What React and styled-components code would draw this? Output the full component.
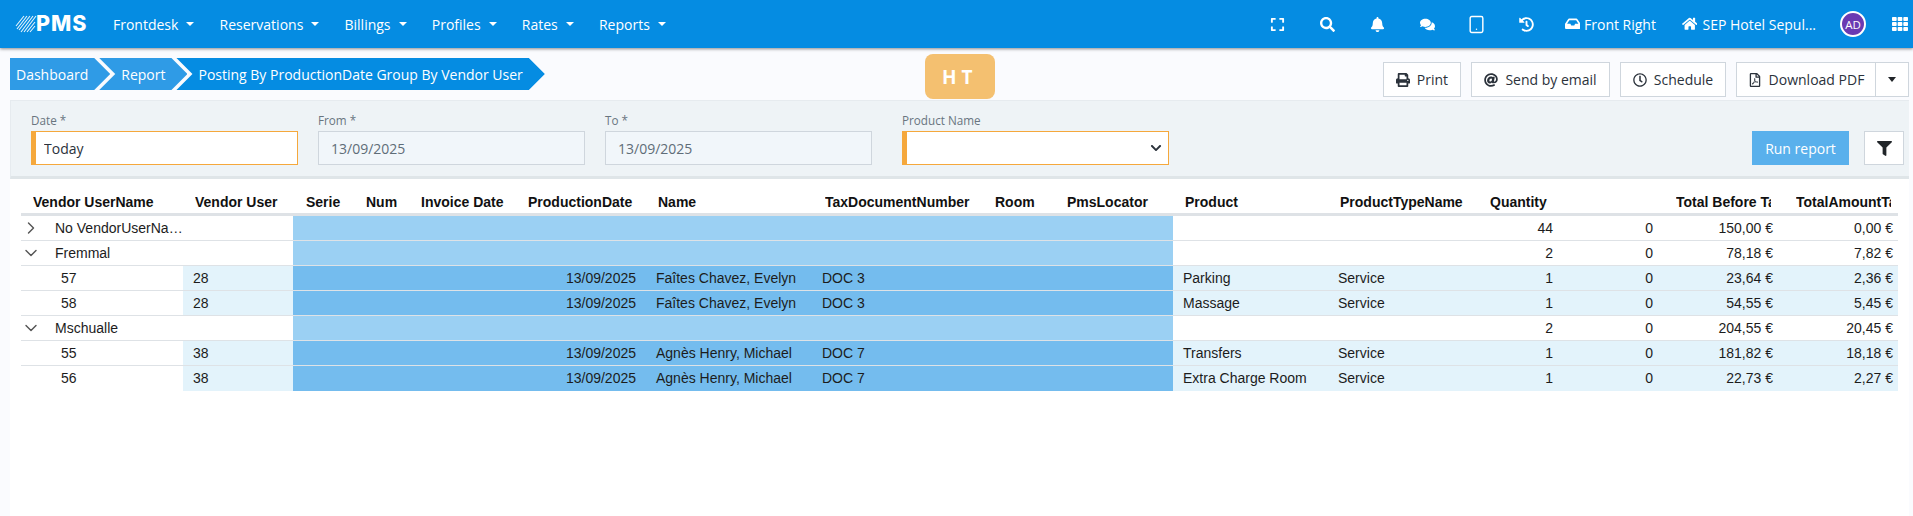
import React from "react";
import styled, { createGlobalStyle } from "styled-components";
import { FaExpand, FaSearch, FaBell, FaComments, FaHistory, FaInbox, FaHome, FaTh, FaPrint, FaAt, FaRegClock, FaRegFilePdf, FaFilter, FaChevronDown } from "react-icons/fa";
import { Tablet, ChevronDown, ChevronRight } from "lucide-react";

const Global = createGlobalStyle`
  html, body { margin: 0; padding: 0; height: 100%; overflow: hidden; background: #fafbfe; }
  * { box-sizing: border-box; }
  body { font-family: "Open Sans", "Noto Sans", sans-serif; font-size: 14px; color: #212529; }
`;

const Page = styled.div`
  display: flex;
  flex-direction: column;
  height: 516px;
`;

const Nav = styled.header`
  flex: none;
  height: 48px;
  display: flex;
  align-items: center;
  background: #058ce2;
  color: #fff;
  box-shadow: 0 1px 3px rgba(0, 0, 0, 0.45);
  position: relative;
  z-index: 1;
`;

const Logo = styled.div`
  display: flex;
  align-items: center;
  gap: 0;
  width: 100.4px;
  padding-left: 15px;
`;

const LogoText = styled.span`
  font-family: Inter, sans-serif;
  font-weight: 800;
  font-size: 21.5px;
  letter-spacing: 1px;
  line-height: 1;
  margin-left: -1px;
`;

const NavItem = styled.div`
  display: flex;
  align-items: center;
  padding: 0 12.6px;
  white-space: nowrap;
  &::after {
    content: "";
    margin-left: 8px;
    border-top: 4px solid #fff;
    border-left: 4px solid transparent;
    border-right: 4px solid transparent;
  }
`;

const NavRight = styled.div`
  margin-left: auto;
  display: flex;
  align-items: center;
  height: 100%;
`;

const NavIcon = styled.div`
  width: 49.8px;
  display: flex;
  justify-content: center;
  align-items: center;
  font-size: 15px;
`;

const NavLink = styled.div`
  display: flex;
  align-items: center;
  gap: ${(p) => p.$gap}px;
  white-space: nowrap;
  margin-left: ${(p) => p.$ml}px;
  font-size: ${(p) => p.$icon}px;
`;

const NavLabel = styled.span`
  font-size: 14px;
`;

const Avatar = styled.div`
  width: 26px;
  height: 26px;
  margin-left: 24px;
  border-radius: 50%;
  border: 2px solid #fff;
  background: #6a3ab2;
  display: flex;
  align-items: center;
  justify-content: center;
  font-size: 11.5px;
`;

const GridIcon = styled.div`
  margin: 0 5px 0 26px;
  display: flex;
  font-size: 16px;
`;

const TopRow = styled.div`
  flex: none;
  height: 52px;
  display: flex;
  align-items: flex-start;
  padding: 0 4px 0 10px;
`;

const Crumbs = styled.nav`
  display: flex;
  margin-top: 10px;
`;

const Crumb = styled.div`
  height: 32px;
  display: flex;
  align-items: center;
  white-space: nowrap;
  color: #fff;
  background: ${(p) => (p.$current ? "#058ce2" : "#2f9be6")};
  padding: ${(p) => (p.$first ? "0 22px 0 6px" : "0 22px 0 22px")};
  margin-left: ${(p) => (p.$first ? 0 : -11)}px;
  clip-path: ${(p) =>
    p.$first
      ? "polygon(0 0, calc(100% - 16px) 0, 100% 50%, calc(100% - 16px) 100%, 0 100%)"
      : "polygon(0 0, calc(100% - 16px) 0, 100% 50%, calc(100% - 16px) 100%, 0 100%, 16px 50%)"};
`;

const Badge = styled.div`
  width: 70px;
  height: 45px;
  margin: 6px 0 0 380px;
  border-radius: 8px;
  background: #f4c070;
  color: #fff;
  font-weight: 700;
  font-size: 19px;
  letter-spacing: 5px;
  display: flex;
  align-items: center;
  justify-content: center;
`;

const Actions = styled.div`
  margin: 14px 0 0 auto;
  display: flex;
  gap: 10px;
`;

const ActionButton = styled.button`
  height: 35px;
  display: flex;
  align-items: center;
  justify-content: center;
  gap: 7px;
  width: ${(p) => p.$w}px;
  padding: 0;
  background: #fff;
  border: 1px solid #cfd6dd;
  color: #2b323b;
  font: inherit;
`;

const SplitGroup = styled.div`
  display: flex;
  & > button + button {
    margin-left: -1px;
  }
`;

const Caret = styled.span`
  border-top: 5px solid #212529;
  border-left: 4.5px solid transparent;
  border-right: 4.5px solid transparent;
`;

const Panel = styled.section`
  flex: none;
  height: 79px;
  margin: 0 4px 0 10px;
  background: #eef3f6;
  border-top: 1px solid #e6ebef;
  border-left: 1px solid #e6ebef;
  border-bottom: 3px solid #dfe5e8;
  display: flex;
  align-items: flex-end;
  padding: 0 5px 11px 20px;
`;

const Field = styled.div`
  width: 267px;
  margin-right: ${(p) => p.$mr}px;
`;

const FieldLabel = styled.label`
  display: block;
  font-size: 11.7px;
  line-height: 16px;
  margin-bottom: 3px;
  color: #69757f;
`;

const Input = styled.input`
  display: block;
  width: 100%;
  height: 34px;
  padding: 0 12px 0 ${(p) => (p.$required ? 8 : 12)}px;
  font: inherit;
  outline: none;
  color: ${(p) => (p.$required ? "#2b323b" : "#5f6d78")};
  background: ${(p) => (p.$required ? "#fff" : "#f1f6fa")};
  border: 1px solid ${(p) => (p.$required ? "#f5a83c" : "#cfd6dd")};
  border-left-width: ${(p) => (p.$required ? 5 : 1)}px;
`;

const SelectBox = styled.div`
  height: 34px;
  display: flex;
  align-items: center;
  justify-content: flex-end;
  padding-right: 6px;
  background: #fff;
  border: 1px solid #f5a83c;
  border-left-width: 5px;
  color: #2b323b;
  font-size: 12px;
`;

const RunButton = styled.button`
  margin-left: auto;
  width: 97px;
  height: 34px;
  border: none;
  background: #59b0ec;
  color: #fff;
  font: inherit;
`;

const FilterButton = styled.button`
  margin-left: 15px;
  width: 40px;
  height: 34px;
  display: flex;
  align-items: center;
  justify-content: center;
  padding: 0;
  border: 1px solid #cfd6dd;
  background: #fff;
  color: #212529;
  font-size: 15px;
`;

const Card = styled.main`
  flex: 1;
  margin: 0 4px 0 10px;
  padding: 11px 11px 0;
  background: #fff;
  font-family: "Liberation Sans", Arial, sans-serif;
`;

const COLS = "162px 110px 61px 55px 107px 131px 166px 170px 72px 118px 155px 150px 80px 100px 120px 120px";

const HeadRow = styled.div`
  display: grid;
  grid-template-columns: ${COLS};
  height: 26px;
  border-bottom: 3px solid #dee2e6;
  font-weight: 700;
  line-height: 25px;
  color: #111;
`;

const HeadCell = styled.div`
  margin: 0 7px 0 ${(p) => p.$ml || 12}px;
  overflow: hidden;
  white-space: nowrap;
`;

const Row = styled.div`
  display: grid;
  grid-template-columns: ${COLS};
  height: 25px;
  line-height: 24px;
  color: #1c1c1c;
  &:last-child > div {
    border-bottom: none;
  }
`;

const TONES = { none: "#fff", light: "#e3f3fb", band: "#9bd0f3", blue: "#74bcee" };

const Cell = styled.div`
  min-width: 0;
  padding: ${(p) => (p.$right ? "0 5px 0 0" : "0 0 0 10px")};
  text-align: ${(p) => (p.$right ? "right" : "left")};
  white-space: nowrap;
  overflow: hidden;
  background: ${(p) => TONES[p.$tone || "none"]};
  border-bottom: 1px solid #dee2e6;
  grid-column: ${(p) => p.$span || "auto"};
`;

const DateCell = styled(Cell)`
  padding: 0 11px 0 0;
  text-align: right;
`;

const NameCell = styled(Cell)`
  padding-left: 9px;
`;

const DocCell = styled(Cell)`
  padding-left: 9px;
`;

const GroupCell = styled(Cell)`
  display: flex;
  align-items: center;
  padding: 0;
`;

const Toggle = styled.span`
  width: 34px;
  flex: none;
  display: flex;
  color: #555;
`;

const GroupName = styled.span`
  overflow: hidden;
  text-overflow: ellipsis;
`;

const ChildId = styled(Cell)`
  padding-left: 40px;
`;

const Logomark = () => (
  <svg width="22" height="18" viewBox="0 0 22 18" fill="none" stroke="#fff" strokeWidth="1.1" opacity="0.9">
    <path d="M1 11L9 1M2 14L12 1M4 15L15 1M6 17L18 1M9 17L21 1M12 17L20 7M15 17L20 11" />
  </svg>
);

const headers = [
  ["Vendor UserName"], ["Vendor User"], ["Serie", 13], ["Num"], ["Invoice Date"], ["ProductionDate"], ["Name", 11],
  ["TaxDocumentNumber"], ["Room"], ["PmsLocator"], ["Product"], ["ProductTypeName"], ["Quantity"], [""],
  ["Total Before Tax", 18], ["TotalAmountTax", 18],
];

const rows = [
  { name: "No VendorUserName", open: false, t: ["44", "0", "150,00 €", "0,00 €"] },
  { name: "Fremmal", open: true, t: ["2", "0", "78,18 €", "7,82 €"] },
  { id: "57", user: "28", guest: "Faîtes Chavez, Evelyn", doc: "DOC 3", product: "Parking", t: ["1", "0", "23,64 €", "2,36 €"] },
  { id: "58", user: "28", guest: "Faîtes Chavez, Evelyn", doc: "DOC 3", product: "Massage", t: ["1", "0", "54,55 €", "5,45 €"] },
  { name: "Mschualle", open: true, t: ["2", "0", "204,55 €", "20,45 €"] },
  { id: "55", user: "38", guest: "Agnès Henry, Michael", doc: "DOC 7", product: "Transfers", t: ["1", "0", "181,82 €", "18,18 €"] },
  { id: "56", user: "38", guest: "Agnès Henry, Michael", doc: "DOC 7", product: "Extra Charge Room", t: ["1", "0", "22,73 €", "2,27 €"] },
];

const Totals = ({ t, tone }) =>
  t.map((v, i) => (
    <Cell key={i} $right $tone={tone}>
      {v}
    </Cell>
  ));

const GroupRow = ({ r }) => (
  <Row>
    <GroupCell>
      <Toggle>{r.open ? <ChevronDown size={20} strokeWidth={1.7} /> : <ChevronRight size={20} strokeWidth={1.7} />}</Toggle>
      <GroupName>{r.name}</GroupName>
    </GroupCell>
    <Cell />
    <Cell $tone="band" $span="3 / 11" />
    <Cell />
    <Cell />
    <Totals t={r.t} />
  </Row>
);

const ChildRow = ({ r }) => (
  <Row>
    <ChildId>{r.id}</ChildId>
    <Cell $tone="light">{r.user}</Cell>
    <Cell $tone="blue" />
    <Cell $tone="blue" />
    <Cell $tone="blue" />
    <DateCell $tone="blue">13/09/2025</DateCell>
    <NameCell $tone="blue">{r.guest}</NameCell>
    <DocCell $tone="blue">{r.doc}</DocCell>
    <Cell $tone="blue" />
    <Cell $tone="blue" />
    <Cell $tone="light">{r.product}</Cell>
    <Cell $tone="light">Service</Cell>
    <Totals t={r.t} tone="light" />
  </Row>
);

export default function App() {
  return (
    <Page>
      <Global />
      <Nav>
        <Logo>
          <Logomark />
          <LogoText>PMS</LogoText>
        </Logo>
        {["Frontdesk", "Reservations", "Billings", "Profiles", "Rates", "Reports"].map((n) => (
          <NavItem key={n}>{n}</NavItem>
        ))}
        <NavRight>
          <NavIcon><FaExpand /></NavIcon>
          <NavIcon><FaSearch /></NavIcon>
          <NavIcon><FaBell /></NavIcon>
          <NavIcon><FaComments /></NavIcon>
          <NavIcon><Tablet size={19} strokeWidth={1.8} /></NavIcon>
          <NavIcon><FaHistory /></NavIcon>
          <NavLink $ml={13} $gap={4} $icon={15.5}><FaInbox /><NavLabel>Front Right</NavLabel></NavLink>
          <NavLink $ml={26} $gap={5} $icon={15.5}><FaHome /><NavLabel>SEP Hotel Sepul...</NavLabel></NavLink>
          <Avatar>AD</Avatar>
          <GridIcon><FaTh /></GridIcon>
        </NavRight>
      </Nav>
      <TopRow>
        <Crumbs>
          <Crumb $first>Dashboard</Crumb>
          <Crumb>Report</Crumb>
          <Crumb $current>Posting By ProductionDate Group By Vendor User</Crumb>
        </Crumbs>
        <Badge>HT</Badge>
        <Actions>
          <ActionButton $w={78}><FaPrint />Print</ActionButton>
          <ActionButton $w={139}><FaAt />Send by email</ActionButton>
          <ActionButton $w={106}><FaRegClock />Schedule</ActionButton>
          <SplitGroup>
            <ActionButton $w={140}><FaRegFilePdf />Download PDF</ActionButton>
            <ActionButton $w={34}><Caret /></ActionButton>
          </SplitGroup>
        </Actions>
      </TopRow>
      <Panel>
        <Field $mr={20}>
          <FieldLabel>Date *</FieldLabel>
          <Input $required readOnly value="Today" />
        </Field>
        <Field $mr={20}>
          <FieldLabel>From *</FieldLabel>
          <Input readOnly value="13/09/2025" />
        </Field>
        <Field $mr={30}>
          <FieldLabel>To *</FieldLabel>
          <Input readOnly value="13/09/2025" />
        </Field>
        <Field>
          <FieldLabel>Product Name</FieldLabel>
          <SelectBox><FaChevronDown /></SelectBox>
        </Field>
        <RunButton>Run report</RunButton>
        <FilterButton><FaFilter /></FilterButton>
      </Panel>
      <Card>
        <HeadRow>
          {headers.map(([h, ml], i) => (
            <HeadCell key={i} $ml={ml}>{h}</HeadCell>
          ))}
        </HeadRow>
        {rows.map((r, i) => (r.name ? <GroupRow key={i} r={r} /> : <ChildRow key={i} r={r} />))}
      </Card>
    </Page>
  );
}
